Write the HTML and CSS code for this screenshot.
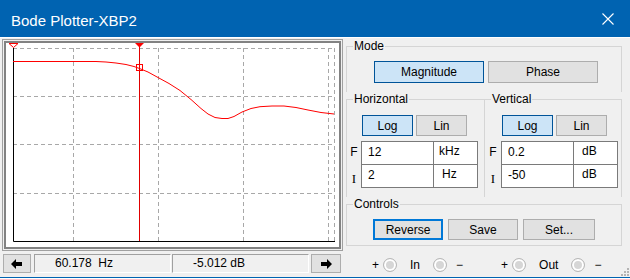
FILE: index.html
```html
<!DOCTYPE html>
<html lang="en">
<head>
    <meta charset="UTF-8">
    <title>Bode Plotter-XBP2</title>
    <link rel="stylesheet" href="styles.css">
</head>
<body>
    <div class="window">
        <div class="titlebar">
            <span class="title">Bode Plotter-XBP2</span>
            <svg class="close" width="12" height="12" viewBox="0 0 12 12">
                <path d="M0.5 0.5 L11.5 11.5 M11.5 0.5 L0.5 11.5" stroke="#fff" stroke-width="1.1" fill="none"/>
            </svg>
        </div>

        <div class="content">
            <div class="left-col">
                <div class="plot-frame">
                    <div class="plot-inner">
                        <svg class="plot" width="333" height="204" viewBox="0 0 333 204">
                            <!-- grid -->
                            <g stroke="#a8a8a8" stroke-width="1" stroke-dasharray="4 3" fill="none">
                                <path d="M7 5.5 H329"/>
                                <path d="M7 53.5 H329"/>
                                <path d="M7 101.5 H329"/>
                                <path d="M7 150.5 H329"/>
                                <path d="M67.5 5 V198"/>
                                <path d="M152.5 5 V198"/>
                                <path d="M237.5 5 V198"/>
                                <path d="M322.5 5 V198"/>
                                <path d="M328.5 5 V198"/>
                            </g>
                            <!-- axes -->
                            <path d="M7.5 5 V198.5 H329" stroke="#000" stroke-width="1" fill="none"/>
                            <!-- magnitude curve -->
                            <polyline fill="none" stroke="#ff0000" stroke-width="1"
                                points="7,18.5 90,18.5 100,19 110,20 120,21.5 128,23.5 133.5,25.5 142,29 152,34.5 163,40.5 174,47.5 185,56.5 195,65.5 202,71 209,74.5 216,75.5 222,75.5 228,73.5 236,69 245,65.5 254,63.7 266,63 278,63 290,64.5 302,67 315,69.5 328,71"/>
                            <!-- left cursor -->
                            <polygon points="3,0.5 12,0.5 7.5,4.5" fill="none" stroke="#ff0000" stroke-width="1"/>
                            <!-- right cursor -->
                            <path d="M133.5 0 V198" stroke="#e00000" stroke-width="1"/>
                            <polygon points="129,0 138,0 133.5,4.5" fill="#ff0000"/>
                            <rect x="130.5" y="21.5" width="6" height="6" fill="none" stroke="#ff0000" stroke-width="1"/>
                        </svg>
                    </div>
                </div>

                <div class="readout-bar">
                    <button class="arrow-btn">
                        <svg width="12" height="10" viewBox="0 0 12 10"><path d="M0 5 L5 0 V3 H11 V7 H5 V10 Z" fill="#000"/></svg>
                    </button>
                    <div class="readout">60.178  Hz</div>
                    <div class="readout second">-5.012 dB</div>
                    <button class="arrow-btn right">
                        <svg width="12" height="10" viewBox="0 0 12 10"><path d="M12 5 L7 0 V3 H1 V7 H7 V10 Z" fill="#000"/></svg>
                    </button>
                </div>
            </div>

            <div class="panel">
                <fieldset class="group mode">
                    <legend>Mode</legend>
                    <div class="btn-row mode-row">
                        <button class="btn wide active">Magnitude</button>
                        <button class="btn wide">Phase</button>
                    </div>
                </fieldset>

                <div class="axes-row">
                    <fieldset class="group horiz">
                        <legend>Horizontal</legend>
                        <div class="btn-row scale-row">
                            <button class="btn scale active">Log</button>
                            <button class="btn scale">Lin</button>
                        </div>
                        <div class="entry">
                            <span class="lbl">F</span>
                            <span class="cell value">12</span>
                            <span class="cell unit tight">kHz</span>
                            <span class="lbl lbl-i">I</span>
                            <span class="cell value low">2</span>
                            <span class="cell unit low">Hz</span>
                        </div>
                    </fieldset>
                    <fieldset class="group vert">
                        <legend>Vertical</legend>
                        <div class="btn-row scale-row">
                            <button class="btn scale active">Log</button>
                            <button class="btn scale">Lin</button>
                        </div>
                        <div class="entry">
                            <span class="lbl">F</span>
                            <span class="cell value">0.2</span>
                            <span class="cell unit">dB</span>
                            <span class="lbl lbl-i">I</span>
                            <span class="cell value low">-50</span>
                            <span class="cell unit low">dB</span>
                        </div>
                    </fieldset>
                </div>

                <fieldset class="group controls">
                    <legend>Controls</legend>
                    <div class="btn-row ctrl-row">
                        <button class="btn ctrl focused">Reverse</button>
                        <button class="btn ctrl">Save</button>
                        <button class="btn ctrl set">Set...</button>
                    </div>
                </fieldset>

                <div class="terminals">
                    <div class="term">
                        <span>+</span>
                        <span class="jack"></span>
                        <span class="term-name">In</span>
                        <span class="jack last"></span>
                        <span>&minus;</span>
                    </div>
                    <div class="term">
                        <span>+</span>
                        <span class="jack"></span>
                        <span class="term-name">Out</span>
                        <span class="jack last"></span>
                        <span>&minus;</span>
                    </div>
                </div>
            </div>
        </div>

        <svg class="grip" width="9" height="9" viewBox="0 0 9 9">
            <g fill="#b4b4b4">
                <rect x="7" y="1" width="2" height="2"/>
                <rect x="4" y="4" width="2" height="2"/>
                <rect x="7" y="4" width="2" height="2"/>
                <rect x="1" y="7" width="2" height="2"/>
                <rect x="4" y="7" width="2" height="2"/>
                <rect x="7" y="7" width="2" height="2"/>
            </g>
        </svg>
    </div>
</body>
</html>
```

FILE: styles.css
```css
body {
    margin: 0;
    padding: 0;
    background-color: #ffffff;
    font-family: 'Segoe UI', 'Liberation Sans', Arial, sans-serif;
    font-size: 12px;
    color: #000;
}

.window {
    position: relative;
    width: 630px;
    height: 277px;
    background-color: #f0f0f0;
    border-bottom: 1px solid #0063b1;
    display: flex;
    flex-direction: column;
}

.titlebar {
    height: 37px;
    flex: none;
    background-color: #0063b1;
    color: #fff;
    border-bottom: 1px solid #fff;
    display: flex;
    align-items: center;
    justify-content: space-between;
    padding: 0 16px 0 11px;
}

.title {
    font-size: 15px;
    margin-top: 3px;
}

.close {
    margin-top: 1px;
}

.content {
    display: flex;
    padding-top: 1px;
}

/* plot side */

.left-col {
    width: 341px;
    margin-left: 2px;
    display: flex;
    flex-direction: column;
}

.plot-frame {
    height: 212px;
    box-sizing: border-box;
    border: 1px solid #a0a0a0;
    padding: 1px;
}

.plot-inner {
    height: 208px;
    box-sizing: border-box;
    border: 2px solid #828282;
    background-color: #fff;
}

.plot {
    display: block;
    overflow: visible;
}

.readout-bar {
    display: flex;
    height: 19px;
    margin-top: 3px;
    margin-left: 1px;
}

.arrow-btn {
    width: 28px;
    padding: 0;
    background-color: #e1e1e1;
    border: 1px solid #adadad;
    display: flex;
    align-items: center;
    justify-content: center;
}

.arrow-btn.right {
    width: 30px;
    margin-left: 2px;
}

.readout {
    width: 137px;
    box-sizing: border-box;
    margin-left: 3px;
    padding-left: 20px;
    border-top: 1px solid #a0a0a0;
    border-left: 1px solid #a0a0a0;
    border-bottom: 1px solid #fff;
    border-right: 1px solid #fff;
    line-height: 17px;
    white-space: pre;
}

.readout.second {
    margin-left: 1px;
}

/* control panel */

.panel {
    width: 276px;
    margin-left: 3px;
    display: flex;
    flex-direction: column;
}

.group {
    margin: 0;
    padding: 0;
    min-width: 0;
    box-sizing: border-box;
    border: 1px solid #d5d5d5;
}

.group legend {
    margin-left: 6px;
    padding: 0 1px;
    line-height: 15px;
}

.mode {
    border-bottom: none;
}

.btn-row {
    display: flex;
}

.btn {
    font-family: inherit;
    font-size: 12px;
    color: #000;
    padding: 0;
    background-color: #e1e1e1;
    border: 1px solid #adadad;
}

.btn.active {
    background-color: #cce4f7;
    border-color: #005499;
}

.mode-row {
    padding: 7px 0 9px 27px;
    gap: 4px;
}

.btn.wide {
    width: 110px;
    height: 22px;
}

.axes-row {
    display: flex;
}

.horiz {
    width: 138px;
    border-right: none;
    border-bottom: none;
}

.vert {
    width: 138px;
    border-bottom: none;
}

.scale-row {
    padding-top: 8px;
    gap: 3px;
}

.horiz .scale-row {
    padding-left: 15px;
}

.vert .scale-row {
    padding-left: 17px;
}

.btn.scale {
    width: 51px;
    height: 21px;
}

.entry {
    display: grid;
    grid-template-columns: 14px 73px 44px;
    grid-template-rows: 24px 23px;
    margin-top: 5px;
    margin-bottom: 9px;
}

.vert .entry {
    grid-template-columns: 16px 73px 44px;
}

.lbl {
    text-align: center;
    line-height: 22px;
}

.lbl-i {
    font-family: 'Liberation Serif', 'Times New Roman', serif;
    font-size: 13px;
    line-height: 28px;
}

.cell {
    background-color: #fff;
    border: 1px solid #7a7a7a;
    line-height: 21px;
    padding-left: 6px;
}

.cell.unit {
    border-left: none;
    padding-left: 8px;
    line-height: 18px;
}

.cell.unit.tight {
    padding-left: 5px;
}

.cell.low {
    border-top: none;
}

.controls .ctrl-row {
    padding: 7px 0 5px 26px;
    gap: 5px;
}

.btn.ctrl {
    width: 70px;
    height: 21px;
}

.btn.ctrl.set {
    width: 72px;
}

.btn.focused {
    border: 2px solid #0078d7;
}

.terminals {
    display: flex;
    align-items: center;
    gap: 38px;
    height: 31px;
    box-sizing: border-box;
    padding: 7px 0 0 26px;
}

.term {
    display: flex;
    align-items: center;
}

.jack {
    width: 14px;
    height: 14px;
    box-sizing: border-box;
    border-radius: 50%;
    border: 1px solid #b8b8b8;
    background-color: #d6d6d6;
    box-shadow: inset 0 0 0 2px #fff;
    margin: 0 4px;
}

.jack.last {
    margin-right: 9px;
}

.term-name {
    margin: 0 9px;
}

.grip {
    position: absolute;
    right: 1px;
    bottom: 1px;
}
```
